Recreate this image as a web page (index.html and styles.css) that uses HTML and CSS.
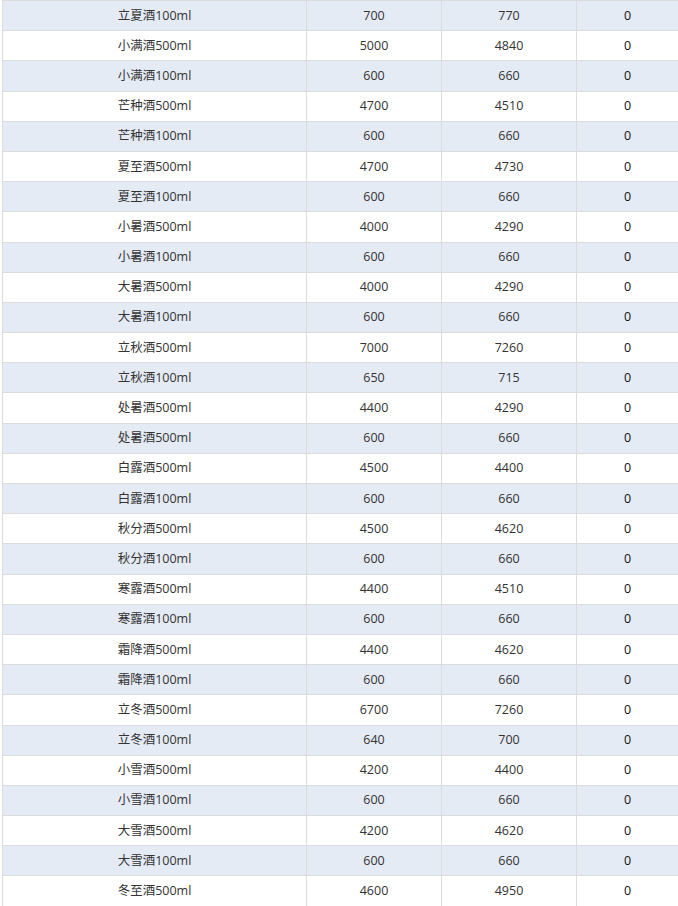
FILE: index.html
```html
<!DOCTYPE html>
<html lang="zh">
<head>
<meta charset="utf-8">
<title>酒价表</title>
<link rel="stylesheet" href="styles.css">
</head>
<body>
<table class="price-table">
<colgroup>
<col class="c-name"><col class="c-num"><col class="c-num"><col class="c-last">
</colgroup>
<tbody>
<tr class="alt"><td>立夏酒100ml</td><td>700</td><td>770</td><td class="zero">0</td></tr>
<tr><td>小满酒500ml</td><td>5000</td><td>4840</td><td class="zero">0</td></tr>
<tr class="alt"><td>小满酒100ml</td><td>600</td><td>660</td><td class="zero">0</td></tr>
<tr><td>芒种酒500ml</td><td>4700</td><td>4510</td><td class="zero">0</td></tr>
<tr class="alt"><td>芒种酒100ml</td><td>600</td><td>660</td><td class="zero">0</td></tr>
<tr><td>夏至酒500ml</td><td>4700</td><td>4730</td><td class="zero">0</td></tr>
<tr class="alt"><td>夏至酒100ml</td><td>600</td><td>660</td><td class="zero">0</td></tr>
<tr><td>小暑酒500ml</td><td>4000</td><td>4290</td><td class="zero">0</td></tr>
<tr class="alt"><td>小暑酒100ml</td><td>600</td><td>660</td><td class="zero">0</td></tr>
<tr><td>大暑酒500ml</td><td>4000</td><td>4290</td><td class="zero">0</td></tr>
<tr class="alt"><td>大暑酒100ml</td><td>600</td><td>660</td><td class="zero">0</td></tr>
<tr><td>立秋酒500ml</td><td>7000</td><td>7260</td><td class="zero">0</td></tr>
<tr class="alt"><td>立秋酒100ml</td><td>650</td><td>715</td><td class="zero">0</td></tr>
<tr><td>处暑酒500ml</td><td>4400</td><td>4290</td><td class="zero">0</td></tr>
<tr class="alt"><td>处暑酒500ml</td><td>600</td><td>660</td><td class="zero">0</td></tr>
<tr><td>白露酒500ml</td><td>4500</td><td>4400</td><td class="zero">0</td></tr>
<tr class="alt"><td>白露酒100ml</td><td>600</td><td>660</td><td class="zero">0</td></tr>
<tr><td>秋分酒500ml</td><td>4500</td><td>4620</td><td class="zero">0</td></tr>
<tr class="alt"><td>秋分酒100ml</td><td>600</td><td>660</td><td class="zero">0</td></tr>
<tr><td>寒露酒500ml</td><td>4400</td><td>4510</td><td class="zero">0</td></tr>
<tr class="alt"><td>寒露酒100ml</td><td>600</td><td>660</td><td class="zero">0</td></tr>
<tr><td>霜降酒500ml</td><td>4400</td><td>4620</td><td class="zero">0</td></tr>
<tr class="alt"><td>霜降酒100ml</td><td>600</td><td>660</td><td class="zero">0</td></tr>
<tr><td>立冬酒500ml</td><td>6700</td><td>7260</td><td class="zero">0</td></tr>
<tr class="alt"><td>立冬酒100ml</td><td>640</td><td>700</td><td class="zero">0</td></tr>
<tr><td>小雪酒500ml</td><td>4200</td><td>4400</td><td class="zero">0</td></tr>
<tr class="alt"><td>小雪酒100ml</td><td>600</td><td>660</td><td class="zero">0</td></tr>
<tr><td>大雪酒500ml</td><td>4200</td><td>4620</td><td class="zero">0</td></tr>
<tr class="alt"><td>大雪酒100ml</td><td>600</td><td>660</td><td class="zero">0</td></tr>
<tr><td>冬至酒500ml</td><td>4600</td><td>4950</td><td class="zero">0</td></tr>
</tbody>
</table>
</body>
</html>
```

FILE: styles.css
```css
html, body {
  margin: 0;
  padding: 0;
  background: #ffffff;
  overflow: hidden;
}

body {
  font-family: "Open Sans", "Noto Sans CJK SC", sans-serif;
  font-size: 12.5px;
  color: #333333;
}

.price-table {
  margin-left: 2px;
  width: 677px;
  table-layout: fixed;
  border-collapse: separate;
  border-spacing: 0;
  border-left: 1px solid #dcdcdc;
}

.c-name { width: 304px; }
.c-num { width: 135px; }
.c-last { width: 102px; }

.price-table td {
  height: 29.2px;
  padding: 0;
  text-align: center;
  vertical-align: middle;
  line-height: 16px;
  border-top: 1px solid #dcdcdc;
  border-right: 1px solid #dcdcdc;
  white-space: nowrap;
}

.price-table tr.alt td {
  background: #e5ebf5;
}

.price-table td.zero {
  color: #111111;
}
```
